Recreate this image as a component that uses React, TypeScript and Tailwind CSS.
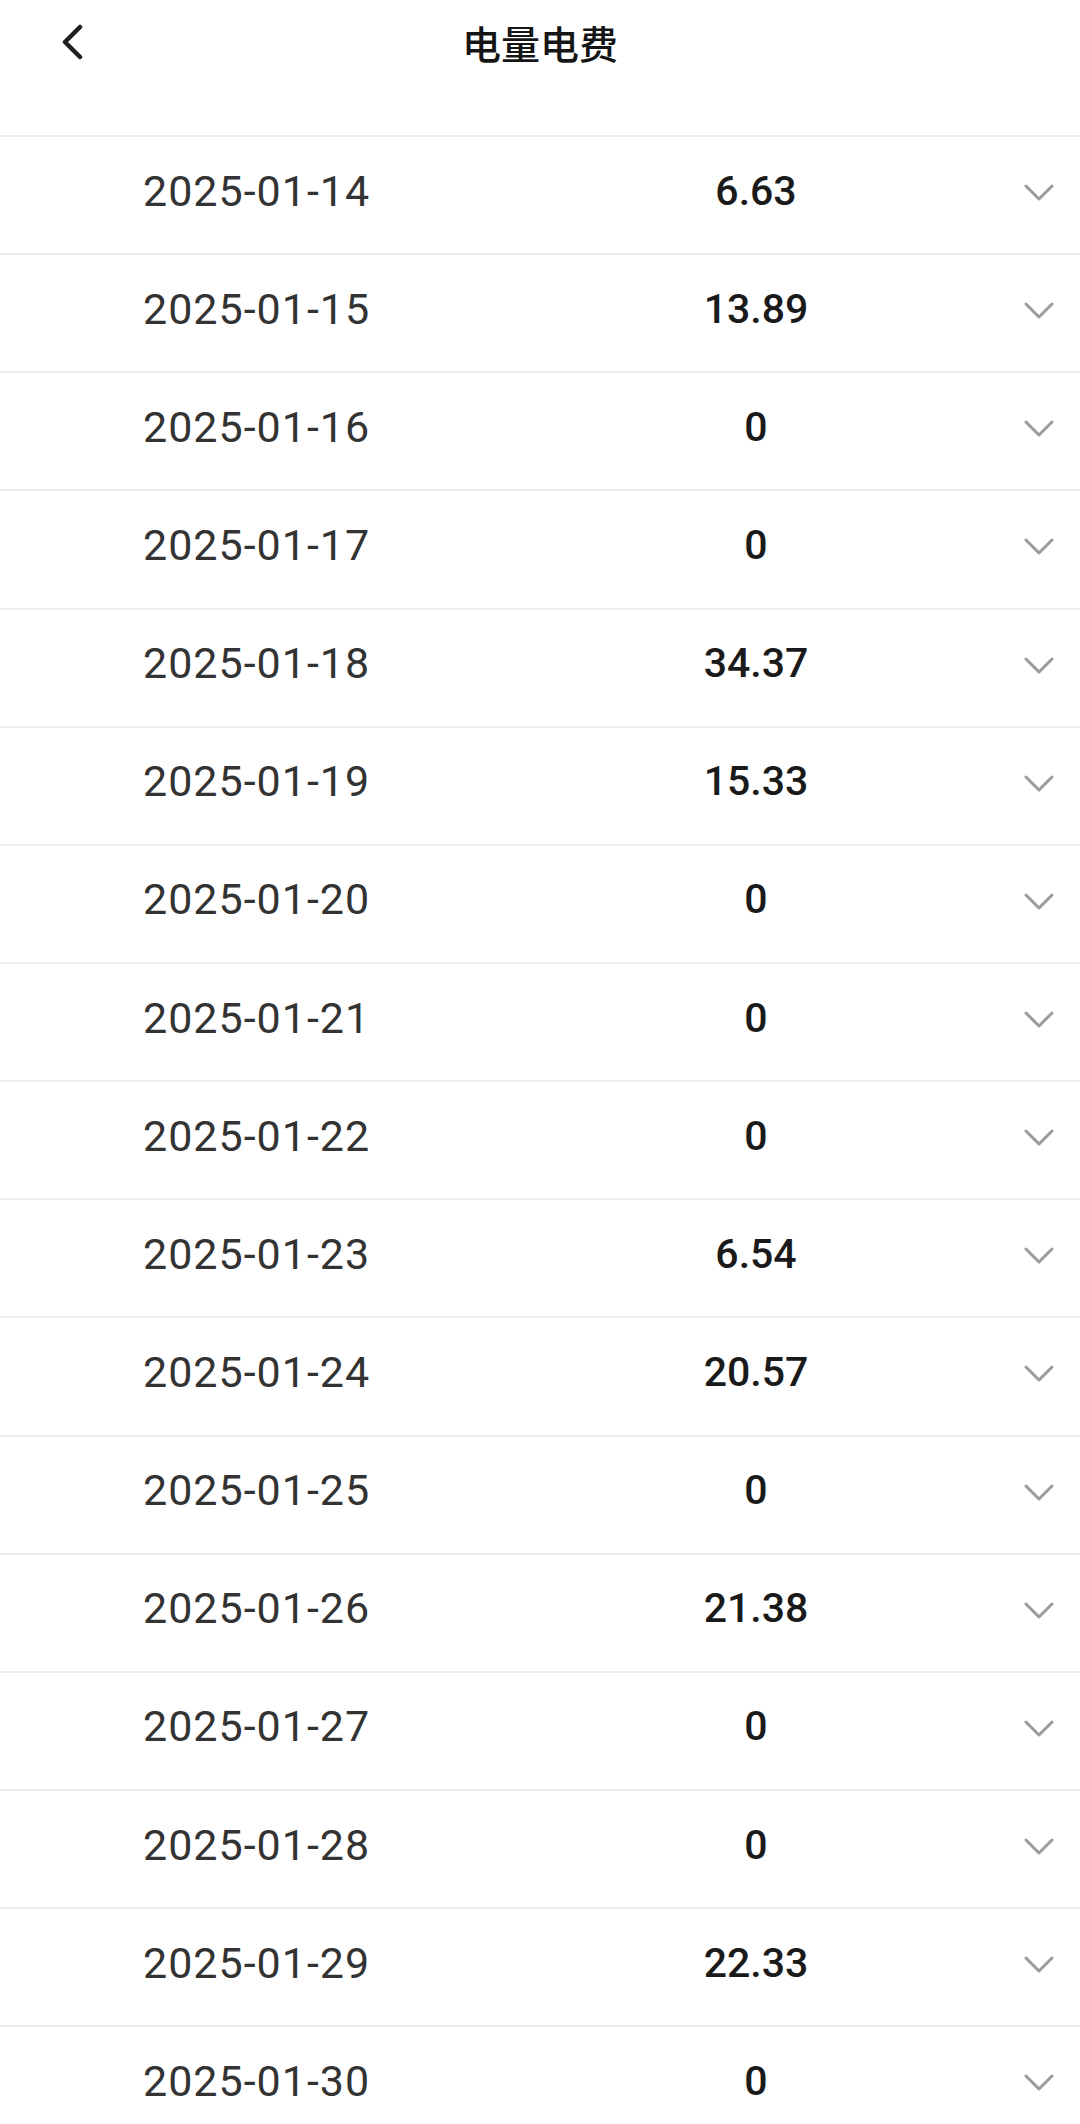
import React from 'react';

const rows: [string, string][] = [
  ['2025-01-14', '6.63'],
  ['2025-01-15', '13.89'],
  ['2025-01-16', '0'],
  ['2025-01-17', '0'],
  ['2025-01-18', '34.37'],
  ['2025-01-19', '15.33'],
  ['2025-01-20', '0'],
  ['2025-01-21', '0'],
  ['2025-01-22', '0'],
  ['2025-01-23', '6.54'],
  ['2025-01-24', '20.57'],
  ['2025-01-25', '0'],
  ['2025-01-26', '21.38'],
  ['2025-01-27', '0'],
  ['2025-01-28', '0'],
  ['2025-01-29', '22.33'],
  ['2025-01-30', '0'],
];

function Chevron() {
  return (
    <svg width="30" height="18" viewBox="0 0 30 18" fill="none">
      <polyline points="2,2 15,15 28,2" stroke="#9b9b9b" strokeWidth="3" strokeLinecap="round" strokeLinejoin="round" />
    </svg>
  );
}

export default function App() {
  return (
    <div className="w-[1080px] h-[2124px] overflow-hidden bg-white font-['Roboto','Noto_Sans_CJK_SC',sans-serif]">
      {/* Header */}
      <div className="h-[135px]">
        <div className="h-[84px] grid grid-cols-[1fr_auto_1fr] items-center">
          <div className="pl-[60px] flex items-center">
            <svg width="24" height="36" viewBox="0 0 24 36" fill="none">
              <polyline points="20,3 5,18 20,33" stroke="#1f1f1f" strokeWidth="4.5" strokeLinecap="round" strokeLinejoin="round" />
            </svg>
          </div>
          <div className="text-[39px] font-medium text-[#151515] font-['Noto_Sans_CJK_SC',sans-serif] leading-none">
            电量电费
          </div>
          <div />
        </div>
      </div>

      {/* List */}
      <div>
        {rows.map(([date, value]) => (
          <div
            key={date}
            className="h-[118.15px] border-t-2 border-[#ececec] pb-[8px] grid grid-cols-[556px_400px_1fr] items-center"
          >
            <div className="pl-[143px] text-[43px] tracking-[1px] text-[#333333] leading-none">{date}</div>
            <div className="text-center text-[41px] font-medium text-[#1a1a1a] leading-none">{value}</div>
            <div className="pl-[68px] pt-[4px] flex items-center">
              <Chevron />
            </div>
          </div>
        ))}
      </div>
    </div>
  );
}
